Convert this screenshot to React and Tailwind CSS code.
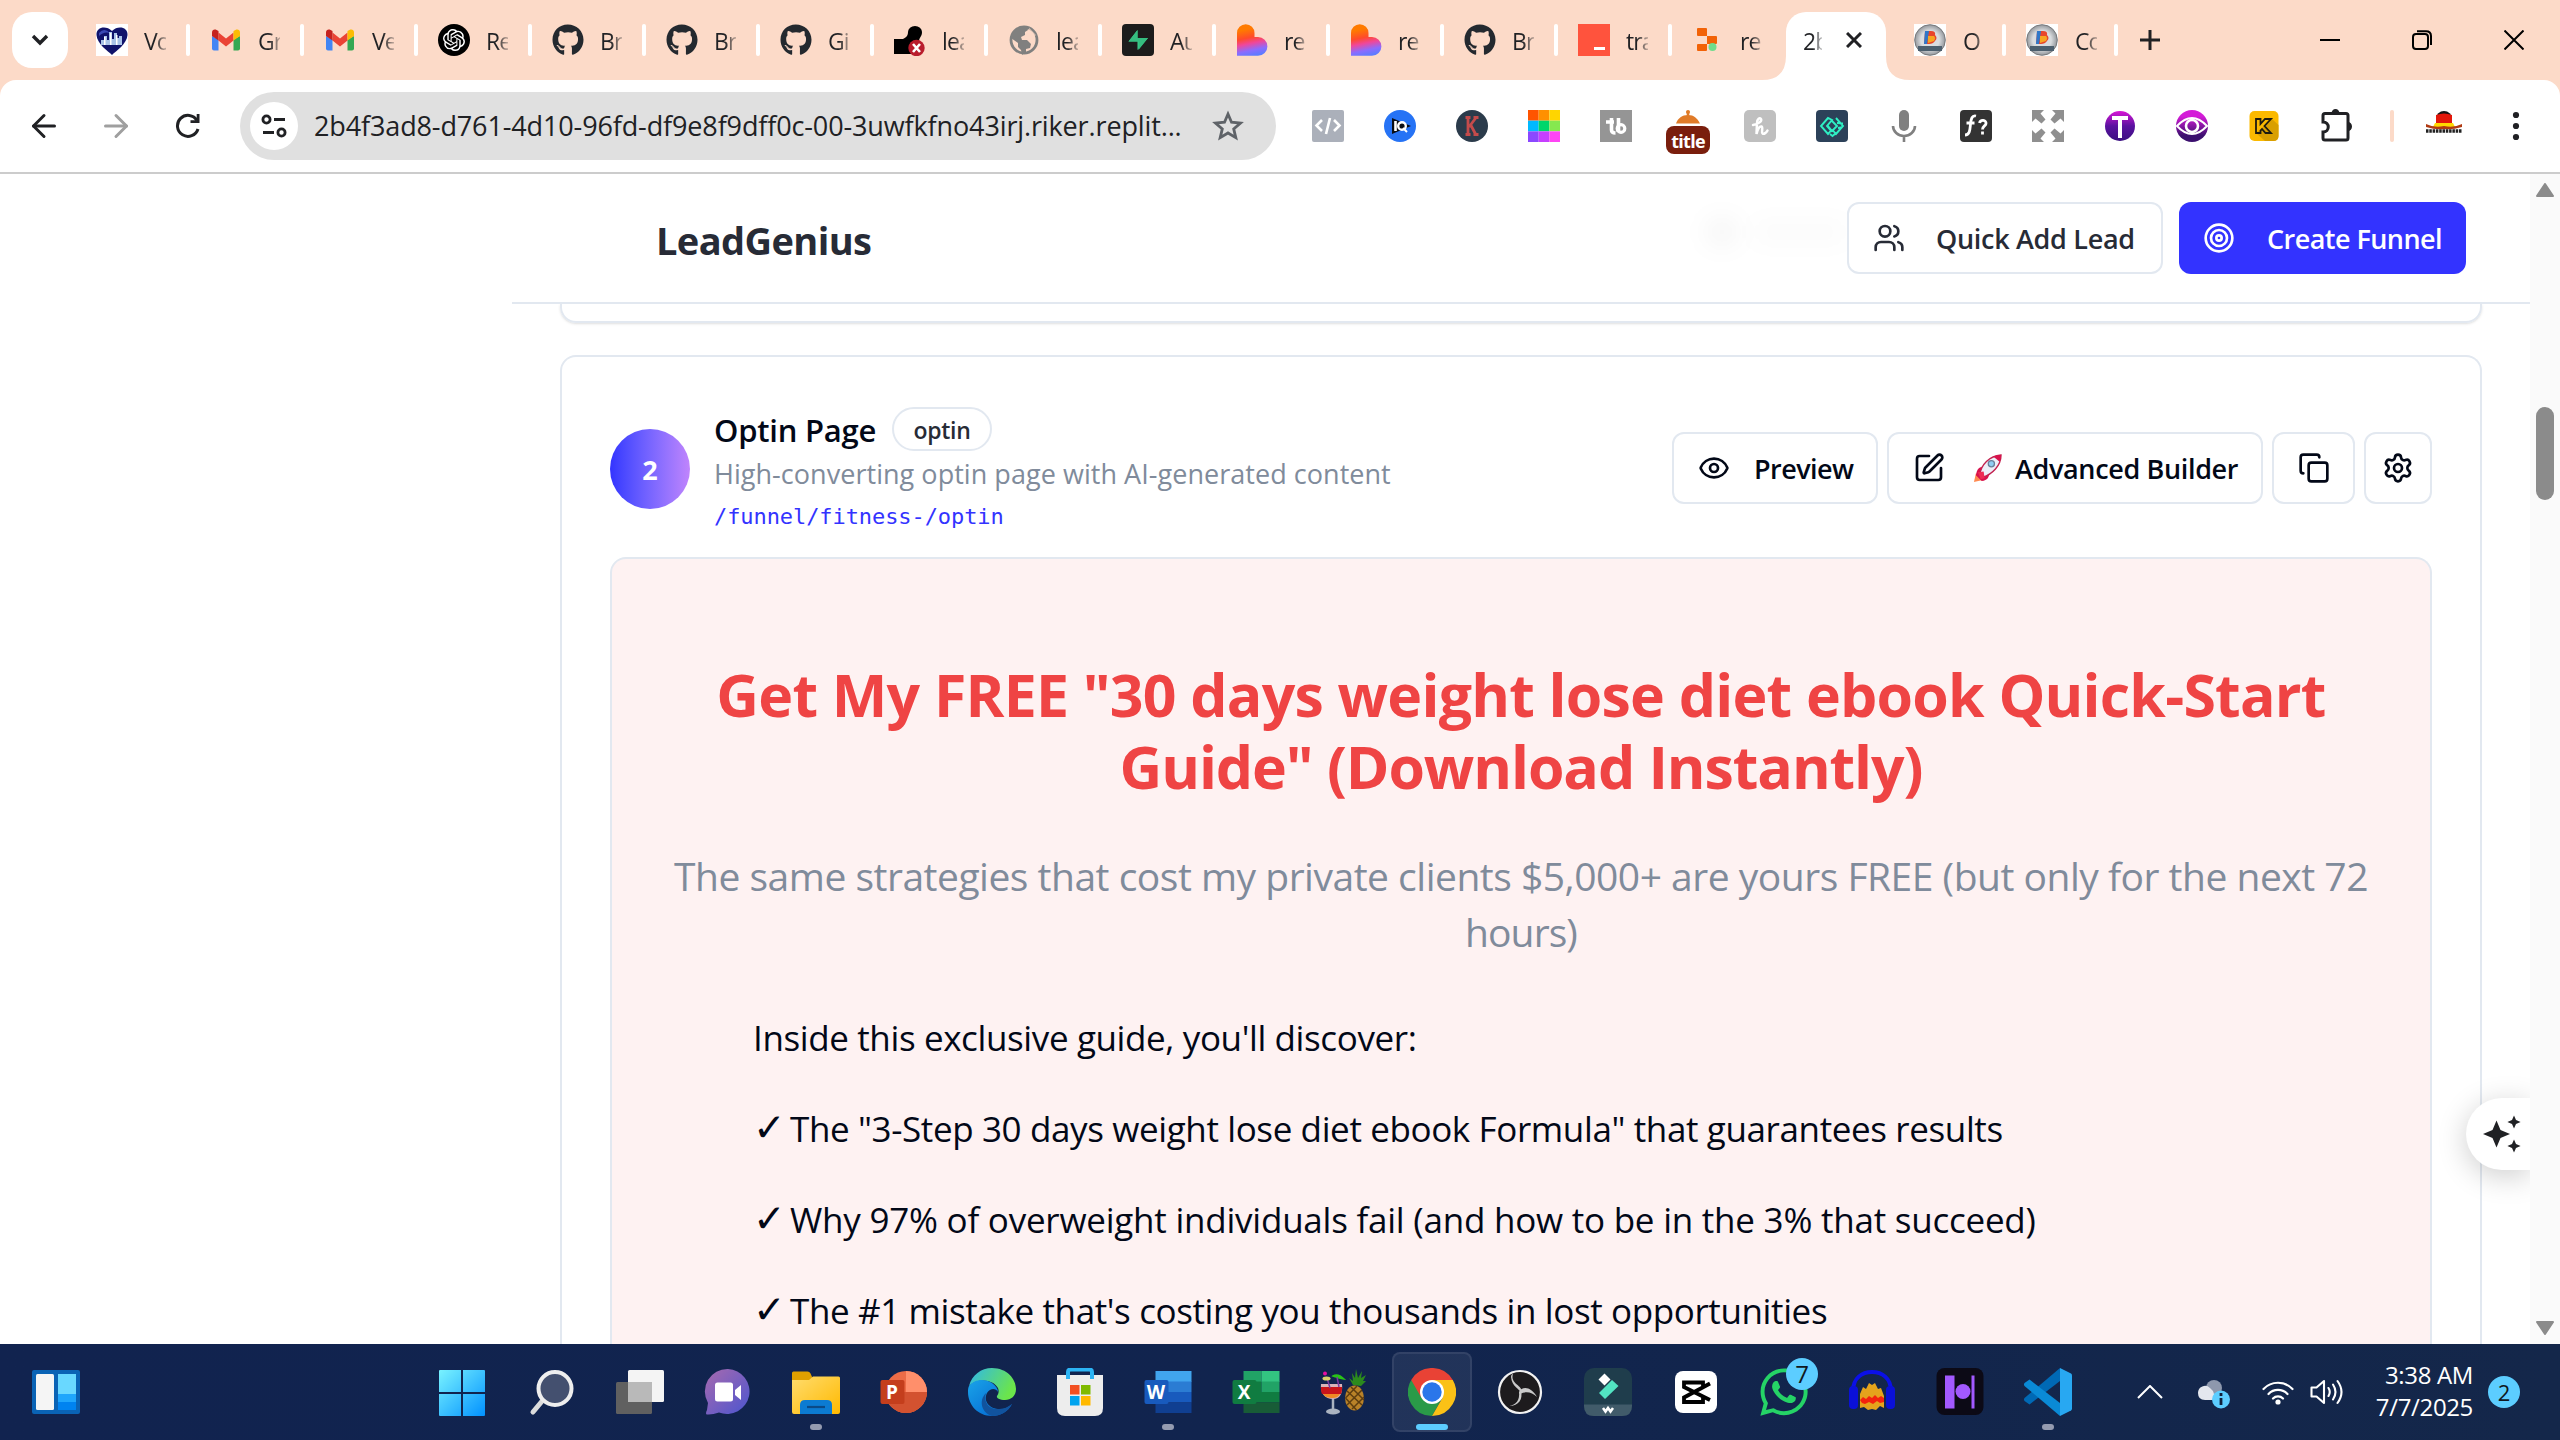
import { Users, Target, Eye, SquarePen, Copy, Settings, ArrowLeft, ArrowRight } from "lucide-react";
import { FaGithub, FaWhatsapp } from "react-icons/fa";
import { SiOpenai } from "react-icons/si";

/* ---------- tab favicons ---------- */

const Heart = () => (
  <svg viewBox="0 0 32 32" className="size-8 bg-white">
    <path d="M16 31C12 27 1 20 0.500 11 0 3 10 1 16 7 22 1 32 3 31.500 11 31 20 20 27 16 31Z" fill="#10136b" />
    <path d="M3 9q5-6 11 0-6-2-11 3z" fill="#3a49b4" />
    <path d="M5 21v-5h3v-4h3v4h2V8h3v7h2V9h3v5h2v-2h3v9Z" fill="#a9c3e8" />
    <path d="M8 21v-8h1.500v8zM14 21V9h1.500v12zM20 21V11h1.500v10z" fill="#fff" />
  </svg>
);

const Gmail = () => (
  <svg viewBox="0 0 32 32" className="size-8">
    <path d="M2 12v12.500q0 2 2 2h4.500V15.500z" fill="#4285f4" />
    <path d="M30 12v12.500q0 2-2 2h-4.500V15.500z" fill="#34a853" />
    <path d="M8.500 8.500 16 14.500l7.500-6v8L16 22.500l-7.500-6z" fill="#ea4335" />
    <path d="M2 8.500C2 5 5.500 4.500 8.500 7v9.500L2 12z" fill="#c5221f" />
    <path d="M30 8.500C30 5 26.500 4.500 23.500 7v9.500L30 12z" fill="#fbbc04" />
  </svg>
);

const OpenAI = () => (
  <span className="flex size-8 items-center justify-center rounded-full bg-black">
    <SiOpenai className="size-[22px] text-white" />
  </span>
);

const GitHub = () => <FaGithub className="size-8 text-[#24292f]" />;

const BrokenSite = () => (
  <svg viewBox="0 0 32 32" className="size-8">
    <path d="M0 15h9c4-2 5-4 5-7a7 6 0 0 1 14 0c0 5-3 5-3 10v12H0z" fill="#000" />
    <path d="M0 29q7-7 0-12z" fill="#000" />
    <circle cx="22.500" cy="24" r="8.200" fill="#b91c2c" />
    <path d="m19 20 7 8m0-8-7 8" stroke="#fff" strokeWidth="2.600" />
  </svg>
);

const Globe = () => (
  <svg viewBox="0 0 32 32" className="size-8">
    <circle cx="16" cy="16" r="13" fill="none" stroke="#80807f" strokeWidth="2.800" />
    <path d="M3 14C5 6 12 2 19 3l1 3-3 2v3l-4 2 1 3h5l4 4-1 4-4 1v3l-4 3-1-5-3-3v-4z" fill="#80807f" />
    <path d="M21 3.500 28 11l-4 4-4-2-2-3 3-2z" fill="#fcdac8" opacity="0.600" />
  </svg>
);

const Supabase = () => (
  <svg viewBox="0 0 32 32" className="size-8">
    <rect width="32" height="32" rx="4" fill="#1c1c1c" />
    <path d="M15.500 6v11.500H6.500zM26 14H15.500v12z" fill="#3ecf8e" />
    <path d="M15.500 6v8H26L16.500 26v-8.500h-10z" fill="#35bd80" />
  </svg>
);

const Lovable = ({ id }) => (
  <svg viewBox="0 0 32 32" className="size-8">
    <defs>
      <linearGradient id={id} x1="0.350" y1="0" x2="0.550" y2="1">
        <stop offset="0.150" stopColor="#ff7a00" />
        <stop offset="0.420" stopColor="#ff4a2b" />
        <stop offset="0.600" stopColor="#f0479a" />
        <stop offset="0.820" stopColor="#8a6cff" />
        <stop offset="1" stopColor="#5b7cff" />
      </linearGradient>
    </defs>
    <path d="M1 9a8.700 8.700 0 0 1 17.500 0v4h3.500a9.300 9.300 0 0 1 0 18.800H1z" fill={`url(#${id})`} />
  </svg>
);

const RedSquare = () => (
  <svg viewBox="0 0 32 32" className="size-8">
    <rect width="32" height="32" fill="#ff533d" />
    <rect x="16" y="23" width="11" height="3" fill="#fff" />
  </svg>
);

const Replit = () => (
  <svg viewBox="0 0 32 32" className="size-8">
    <path d="M6 4h8q1 0 1 1v7H6q-1 0-1-1V5q0-1 1-1zM15 12h9q1 0 1 1v6q0 1-1 1h-9zM6 20h9v6q0 1-1 1H6q-1 0-1-1v-5q0-1 1-1z" fill="#f26207" />
    <circle cx="20.500" cy="23" r="4" fill="#6fdc8c" />
  </svg>
);

const Blogger = ({ id }) => (
  <svg viewBox="0 0 32 32" className="size-8 bg-white">
    <defs>
      <radialGradient id={id}>
        <stop offset="0.600" stopColor="#d9dcdf" />
        <stop offset="1" stopColor="#93979c" />
      </radialGradient>
    </defs>
    <circle cx="16" cy="16" r="15.300" fill={`url(#${id})`} stroke="#77797c" />
    <path d="M11 7h6q5 0 4 4 3 3 0 6-2 3-6 3h-5z" fill="#e8452c" />
    <path d="M11 7h4l-2 13h-3z" fill="#2f77c9" />
    <path d="M14 12h6q2 2 0 5l-6 2z" fill="#f7a521" />
    <path d="M4 22h24v5H4z" fill="#4c5f6e" />
  </svg>
);

const tabs = [
  ["Vo", <Heart />],
  ["Gr", <Gmail />],
  ["Ve", <Gmail />],
  ["Re", <OpenAI />],
  ["Br", <GitHub />],
  ["Br", <GitHub />],
  ["Gi", <GitHub />],
  ["lea", <BrokenSite />],
  ["lea", <Globe />],
  ["Au", <Supabase />],
  ["re", <Lovable id="lv1" />],
  ["re", <Lovable id="lv2" />],
  ["Br", <GitHub />],
  ["tra", <RedSquare />],
  ["re", <Replit />],
];

function TabTitle({ children }) {
  return (
    <span className="mt-0.5 w-[22px] overflow-hidden bg-linear-to-r from-[#202124] from-50% to-[#20212440] bg-clip-text text-[23px] leading-8 tracking-[-0.9px] whitespace-nowrap text-transparent">
      {children}
    </span>
  );
}

function TabStrip() {
  return (
    <div className="flex h-20 shrink-0 items-center bg-[#fcdac8]">
      <button className="ml-3 flex size-14 items-center justify-center rounded-[20px] bg-white">
        <svg viewBox="0 0 20 20" className="size-5">
          <path d="m3 6 7 7 7-7" fill="none" stroke="#202124" strokeWidth="3.400" />
        </svg>
      </button>
      <div className="ml-2 flex">
        {tabs.map(([title, icon], i) => (
          <div key={i} className="flex h-8 w-[114px] items-center pl-5">
            {icon}
            <div className="ml-4 flex">
              <TabTitle>{title}</TabTitle>
            </div>
            {i < tabs.length - 1 && <span className="ml-auto h-8 w-1 rounded-full bg-white" />}
          </div>
        ))}
      </div>
      <div className="relative flex h-[68px] w-[100px] items-center self-end rounded-t-[20px] bg-white pb-3 pl-[17px]">
        <svg viewBox="0 0 24 24" className="absolute bottom-0 -left-6 size-6">
          <path d="M24 0v24H0Q24 24 24 0" fill="#fff" />
        </svg>
        <svg viewBox="0 0 24 24" className="absolute -right-6 bottom-0 size-6">
          <path d="M0 0v24h24Q0 24 0 0" fill="#fff" />
        </svg>
        <span className="mt-0.5 w-[19px] overflow-hidden bg-linear-to-r from-[#202124] from-50% to-[#20212440] bg-clip-text text-[23px] leading-8 tracking-[-0.9px] whitespace-nowrap text-transparent">
          2b
        </span>
        <svg viewBox="0 0 16 16" className="ml-6 size-4">
          <path d="m1 1 14 14M15 1 1 15" stroke="#202124" strokeWidth="3" />
        </svg>
      </div>
      <div className="ml-2 flex">
        {["O", "Co"].map((t, i) => (
          <div key={t} className="flex h-8 w-28 items-center pl-5">
            <Blogger id={t + "g"} />
            <div className="ml-[17px] flex">
              <TabTitle>{t}</TabTitle>
            </div>
            <span className="ml-auto h-8 w-1 rounded-full bg-white" />
          </div>
        ))}
      </div>
      <svg viewBox="0 0 20 20" className="ml-[22px] size-5">
        <path d="M10 0v20M0 10h20" stroke="#202124" strokeWidth="3" />
      </svg>
      <div className="mr-9 ml-auto flex items-center gap-[72px]">
        <svg viewBox="0 0 20 20" className="size-5">
          <path d="M0 10h20" stroke="#000" strokeWidth="2" />
        </svg>
        <svg viewBox="0 0 20 20" className="size-5">
          <rect x="1" y="4" width="15" height="15" rx="3" fill="none" stroke="#000" strokeWidth="2" />
          <path d="M5 1.200h9Q19 1.200 19 6v9" fill="none" stroke="#000" strokeWidth="2" />
        </svg>
        <svg viewBox="0 0 20 20" className="size-5">
          <path d="m.5.5 19 19M19.500.5l-19 19" stroke="#000" strokeWidth="2" />
        </svg>
      </div>
    </div>
  );
}

/* ---------- extension icons ---------- */

const extensions = [
  <svg viewBox="0 0 32 32" className="size-8">
    <rect width="32" height="32" rx="2" fill="#abb0ba" />
    <path d="m10 10-5.500 5.500L10 21M22 10l5.500 5.500L22 21M18 8l-4 16" fill="none" stroke="#fff" strokeWidth="2.600" />
  </svg>,
  <svg viewBox="0 0 32 32" className="size-8">
    <circle cx="16" cy="16" r="16" fill="#2673f5" />
    <path d="m8 8 19 8-19 8z" fill="#0b0e14" />
    <path d="M11.500 11v10" stroke="#fff" strokeWidth="2.600" />
    <circle cx="18" cy="16" r="3.800" fill="#0b0e14" stroke="#fff" strokeWidth="2.400" />
    <path d="m19 18 4 4" stroke="#fff" strokeWidth="2" />
  </svg>,
  <svg viewBox="0 0 32 32" className="size-8">
    <circle cx="16" cy="16" r="16" fill="#2b3b4b" />
    <path d="M12 7v18M20.500 7 13 17M14.500 14.500 20 25M9.500 7.500h5M9.500 24.500h5M17.500 7.500h5M17.500 24.500h5" fill="none" stroke="#c44b4b" strokeWidth="2.800" />
  </svg>,
  <svg viewBox="0 0 33 33" className="size-8">
    <path d="M0 0h11v11H0z" fill="#ff5400" />
    <path d="M11 0h11v11H11z" fill="#ff9000" />
    <path d="M22 0h11v11H22z" fill="#ffd500" />
    <path d="M0 11h11v11H0z" fill="#00b9ff" />
    <path d="M11 11h11v11H11z" fill="#00d66b" />
    <path d="M22 11h11v11H22z" fill="#86e84f" />
    <path d="M0 22h11v11H0z" fill="#8b48ff" />
    <path d="M11 22h11v11H11z" fill="#c63fff" />
    <path d="M22 22h11v11H22z" fill="#ff45f5" />
  </svg>,
  <svg viewBox="0 0 32 32" className="size-8">
    <rect width="32" height="32" fill="#959595" />
    <path d="M6 12h8M11.500 8v12q0 3 4 3M18.500 8v14" fill="none" stroke="#fff" strokeWidth="3.600" />
    <circle cx="21" cy="18.500" r="3.800" fill="none" stroke="#fff" strokeWidth="3.200" />
  </svg>,
  <span className="flex w-11 flex-col items-center gap-0.5 pt-3">
    <svg viewBox="0 0 28 14" className="h-3.5 w-7">
      <path d="M2 13.500C4 8 8 5 14 5s9 3 12 8.500z" fill="#e07b28" />
      <path d="M14 1v6" stroke="#e07b28" strokeWidth="2.500" />
      <circle cx="14" cy="2" r="2" fill="#e07b28" />
    </svg>
    <span className="flex h-7 w-11 items-center justify-center rounded-lg bg-[#7a1e0d] pt-0.5 text-[18px] leading-6 font-bold tracking-[-0.7px] text-white">
      title
    </span>
  </span>,
  <svg viewBox="0 0 32 32" className="size-8">
    <rect width="32" height="32" rx="5" fill="#bfbfbf" />
    <path d="M9 15c6-1 9-4 8-6s-4 0-4 4l-.5 11c1-5 3-8 5-7.500s-.5 6 1 7 4-1 5-3" fill="none" stroke="#fff" strokeWidth="2.500" strokeLinecap="round" />
  </svg>,
  <svg viewBox="0 0 32 32" className="size-8">
    <rect width="32" height="32" rx="4" fill="#2c4159" />
    <path d="m12 8-7 8 7 8 3-3.500L11 16l5-6zM20 8l7 8-7 8-3-3.500M16 11l5 5-5 5-4-5M14 24l2.500 2L20 23M21 13l6 .5M22 18l5-1" fill="none" stroke="#2ff0c4" strokeWidth="1.900" />
  </svg>,
  <svg viewBox="0 0 32 32" className="size-8">
    <rect x="11" y="0" width="10" height="21" rx="5" fill="#808080" />
    <path d="M5 16a11 10 0 0 0 22 0M16 26v6" fill="none" stroke="#808080" strokeWidth="2.600" />
  </svg>,
  <svg viewBox="0 0 32 32" className="size-8">
    <rect width="32" height="32" rx="4" fill="#333" />
    <path d="M16 6c-4-1-5 3-5.500 8S10 25 5 25M6.500 13h8" fill="none" stroke="#fff" strokeWidth="2.800" />
    <path d="M19.500 13c1-4 7-3 6.500.5-.3 2.500-3.500 2.500-3.500 6M22.500 21.500v3" fill="none" stroke="#fff" strokeWidth="2.800" />
  </svg>,
  <svg viewBox="0 0 32 32" className="size-8">
    <path d="M0 0h12L8.500 3.500l5 6-4 4-6-5L0 12zM32 0H20l3.500 3.500-5 6 4 4 6-5L32 12zM0 32h12l-3.500-3.500 5-6-4-4-6 5L0 20zM32 32H20l3.500-3.500-5-6 4-4 6 5L32 20z" fill="#8f8f8f" />
  </svg>,
  <svg viewBox="0 0 32 32" className="size-8">
    <defs>
      <linearGradient id="pt" x1="0" y1="0" x2="0" y2="1">
        <stop offset="0" stopColor="#d915d6" />
        <stop offset="0.500" stopColor="#5a12a0" />
        <stop offset="1" stopColor="#3a0f80" />
      </linearGradient>
    </defs>
    <circle cx="16" cy="16" r="15" fill="url(#pt)" />
    <path d="M8 8h16M16 8v20" stroke="#fff" strokeWidth="4" />
  </svg>,
  <svg viewBox="0 0 32 32" className="size-8">
    <defs>
      <linearGradient id="pe" x1="0" y1="0" x2="0" y2="1">
        <stop offset="0.200" stopColor="#d41bd8" />
        <stop offset="0.800" stopColor="#3b0f6e" />
      </linearGradient>
    </defs>
    <circle cx="16" cy="16" r="16" fill="url(#pe)" />
    <path d="M1 16Q16 0 31 16 16 32 1 16Z" fill="none" stroke="#fff" strokeWidth="2" />
    <circle cx="16" cy="16" r="6" fill="none" stroke="#fff" strokeWidth="2.600" />
  </svg>,
  <svg viewBox="0 0 32 32" className="size-8">
    <rect x="1.500" y="1" width="29" height="30" rx="5" fill="#fbb900" />
    <path d="m24 9 6.500 6v11q0 5-5 5H17l-9-8z" fill="#d99f00" />
    <path d="M8 9h4.500v5l4.500-5h6l-6.500 7 6.500 7h-5.500l-3.500-4-1.500 1.500V23H8z" fill="none" stroke="#1c1a10" strokeWidth="1.800" />
  </svg>,
  <svg viewBox="0 0 32 32" className="size-8 overflow-visible">
    <path d="M5 3.500h21q2 0 2 2V28q0 2-2 2H5q-2 0-2-2v-6c7 0 7-10 0-10V5.500q0-2 2-2z" fill="none" stroke="#202124" strokeWidth="3" />
    <path d="M11.500 3.500a4 4.500 0 0 1 8 0zM28 12a4 4.500 0 0 1 0 9z" fill="#202124" />
  </svg>,
];

function Toolbar() {
  return (
    <div className="shrink-0 bg-[#fcdac8]">
      <div className="flex h-[94px] items-center rounded-t-[16px] border-b-2 border-[#cccccc] bg-white pl-2">
        <div className="flex w-[72px] justify-center">
          <ArrowLeft className="size-9 text-[#202124]" strokeWidth={2} />
        </div>
        <div className="flex w-[72px] justify-center">
          <ArrowRight className="size-9 text-[#9f9f9f]" strokeWidth={2} />
        </div>
        <div className="flex w-[72px] justify-center">
          <svg viewBox="0 0 26 26" className="size-[26px]">
            <path d="M23 16a10.500 10.500 0 1 1-1-8.500" fill="none" stroke="#202124" strokeWidth="3" />
            <path d="M24.500 1v9h-9v-2.800h6.200V1z" fill="#202124" />
          </svg>
        </div>
        <div className="ml-4 flex h-[68px] w-[1036px] items-center rounded-full bg-[#e0e0e0] pl-2.5">
          <span className="flex size-12 items-center justify-center rounded-full bg-white">
            <svg viewBox="0 0 26 24" className="h-6 w-[26px]">
              <g fill="none" stroke="#202124" strokeWidth="2.800">
                <circle cx="5.500" cy="5.500" r="3.600" />
                <path d="M13 5.500h11M2 18.500h11" />
                <circle cx="20.500" cy="18.500" r="3.600" />
              </g>
            </svg>
          </span>
          <span className="ml-4 text-[27px] leading-9 tracking-[-0.13px] whitespace-nowrap text-[#202124]">
            2b4f3ad8-d761-4d10-96fd-df9e8f9dff0c-00-3uwfkfno43irj.riker.replit...
          </span>
          <svg viewBox="0 0 32 32" className="mr-8 ml-auto size-8">
            <path d="m16 4 3.500 8.200 9 .8-6.800 5.900 2.100 8.700L16 23l-7.800 4.600 2.100-8.700L3.500 13l9-.8z" fill="none" stroke="#5f6368" strokeWidth="2.800" />
          </svg>
        </div>
        <div className="ml-4 flex">
          {extensions.map((icon, i) => (
            <div key={i} className="flex h-8 w-[72px] items-center justify-center">
              {icon}
            </div>
          ))}
        </div>
        <span className="ml-[18px] h-8 w-1 rounded-full bg-[#fcdac8]" />
        <svg viewBox="0 0 40 24" className="mb-2 ml-[30px] h-6 w-10">
          <path d="M12 9a8 8 0 0 1 16 0z" fill="#151515" />
          <path d="M12 5q8-3 16 0v8H12z" fill="#e3170a" />
          <path d="M11 13h18l2 4H9z" fill="#ffd800" />
          <path d="M2 14q8 4 18 2 10 2 18-2v3q-10 3-18 2-8 1-18-2z" fill="#b03a12" />
          <path d="M2 21h36" stroke="#222" strokeWidth="3.500" strokeDasharray="2.500 0.800" />
        </svg>
        <svg viewBox="0 0 8 30" className="ml-[48px] h-[30px] w-2">
          <circle cx="4" cy="4" r="3.100" fill="#202124" />
          <circle cx="4" cy="15" r="3.100" fill="#202124" />
          <circle cx="4" cy="26" r="3.100" fill="#202124" />
        </svg>
      </div>
    </div>
  );
}

/* ---------- page ---------- */

function PageHeader() {
  return (
    <header className="relative flex h-[130px] shrink-0 items-center border-b-2 border-[#e2e8f0] pr-16 pl-36">
      <span className="absolute top-[44px] left-[1194px] h-7 w-8 rounded-full bg-black/4 blur-md" />
      <span className="absolute top-[48px] left-[1240px] h-5 w-24 rounded-full bg-black/2 blur-md" />
      <h1 className="relative mt-[3px] text-[38px] leading-[48px] font-bold tracking-[-0.6px] text-[#272b36]">LeadGenius</h1>
      <div className="relative ml-auto flex gap-4">
        <button className="flex h-[72px] w-[316px] items-center gap-8 rounded-[12px] border-2 border-[#e2e8f0] bg-white pl-6 text-[27px] font-semibold tracking-[-0.3px] whitespace-nowrap text-[#272b36]">
          <Users className="size-8 shrink-0" />
          <span className="mt-0.5 -ml-px">Quick Add Lead</span>
        </button>
        <button className="flex h-[72px] w-[287px] items-center gap-8 rounded-[12px] bg-[#3333ff] pl-6 text-[27px] font-semibold tracking-[-0.55px] whitespace-nowrap text-white">
          <Target className="size-8 shrink-0" />
          <span className="mt-0.5">Create Funnel</span>
        </button>
      </div>
    </header>
  );
}

function CheckLine({ children }) {
  return (
    <p className="flex items-center">
      <span className="-mt-0.5 w-[37px] font-['DejaVu_Sans'] text-[39px]">✓</span>
      {children}
    </p>
  );
}

const Rocket = () => (
  <svg viewBox="0 0 30 30" className="ml-7 size-[29px]">
    <path d="m1 29 2-9 7 7z" fill="#ff8a50" />
    <path d="M3 22c1-7 4-9 9-9l5 5c0 6-2 9-8 10z" fill="#d8124c" />
    <path d="M7 22C8 11 17 2 29 1c0 11-9 20-19 23z" fill="#eceff8" stroke="#c2224f" strokeWidth="1.400" />
    <path d="M29 1c0 3-.5 5-1.500 7L21 2.500C24 1.300 26 1 29 1z" fill="#d8124c" />
    <path d="m5 19 6-1 1 7-4 1z" fill="#ee2b54" />
    <circle cx="19" cy="10" r="3.200" fill="#8fcdf2" stroke="#6b7f9a" strokeWidth="1.300" />
  </svg>
);

function StepCard() {
  return (
    <section className="mt-8 flex grow flex-col rounded-t-[16px] border-2 border-b-0 border-[#e2e8f0] px-12 pt-[50px]">
      <div className="flex h-[130px] items-start">
        <span className="mt-[22px] flex size-20 items-center justify-center rounded-full bg-linear-to-r from-[#3333ff] to-[#c084fc] pt-0.5 text-[27px] font-bold text-white">
          2
        </span>
        <div className="ml-6">
          <div className="flex h-11 items-center">
            <h3 className="mt-0.5 text-[31px] leading-[44px] font-semibold tracking-[-0.24px] text-[#020817]">Optin Page</h3>
            <span className="ml-[16px] flex h-11 w-[100px] items-center justify-center rounded-full border-2 border-[#e2e8f0] pt-0.5 text-[23px] font-semibold tracking-[-0.3px] text-[#272b36]">
              optin
            </span>
          </div>
          <p className="text-[27px] leading-[46px] tracking-[0.04px] text-[#808b9b]">High-converting optin page with AI-generated content</p>
          <p className="font-['DejaVu_Sans_Mono',monospace] text-[22px] leading-10 tracking-[-0.08px] text-[#3333ff]">/funnel/fitness-/optin</p>
        </div>
        <div className="mt-[25px] ml-auto flex gap-[9px] text-[27px] font-semibold whitespace-nowrap text-[#020817]">
          <button className="flex h-[72px] w-[206px] items-center gap-6 rounded-[12px] border-2 border-[#e2e8f0] pl-6 tracking-[-0.55px]">
            <Eye className="size-8 shrink-0" />
            <span className="mt-0.5">Preview</span>
          </button>
          <button className="flex h-[72px] w-[376px] items-center rounded-[12px] border-2 border-[#e2e8f0] pl-6 tracking-[-0.35px]">
            <SquarePen className="size-8 shrink-0" />
            <Rocket />
            <span className="mt-0.5 ml-[13px]">Advanced Builder</span>
          </button>
          <button className="flex h-[72px] w-[83px] items-center justify-center rounded-[12px] border-2 border-[#e2e8f0]">
            <Copy className="size-8" />
          </button>
          <button className="flex h-[72px] w-[68px] items-center justify-center rounded-[12px] border-2 border-[#e2e8f0]">
            <Settings className="size-8" />
          </button>
        </div>
      </div>
      <div className="mt-5 grow rounded-t-[16px] border-2 border-b-0 border-[#e2e8f0] bg-[#fef2f2] pt-[99px]">
        <h2 className="text-center text-[59px] leading-[72px] font-bold tracking-[-0.78px] whitespace-nowrap text-[#ef4444]">
          Get My FREE "30 days weight lose diet ebook Quick-Start
          <br />
          <span className="tracking-[-1.08px]">Guide" (Download Instantly)</span>
        </h2>
        <p className="mt-[46px] text-center text-[39px] leading-[56px] tracking-[-0.49px] whitespace-nowrap text-[#808b9b]">
          The same strategies that cost my private clients $5,000+ are yours FREE (but only for the next 72
          <br />
          <span className="tracking-[-0.9px]">hours)</span>
        </p>
        <div className="mt-8 pl-[141px] text-[35px] leading-[91px] tracking-[-0.38px] whitespace-nowrap text-[#020817]">
          <p>Inside this exclusive guide, you'll discover:</p>
          <CheckLine>The "3-Step 30 days weight lose diet ebook Formula" that guarantees results</CheckLine>
          <CheckLine>
            <span className="tracking-[-0.23px]">Why 97% of overweight individuals fail (and how to be in the 3% that succeed)</span>
          </CheckLine>
          <CheckLine>The #1 mistake that's costing you thousands in lost opportunities</CheckLine>
        </div>
      </div>
    </section>
  );
}

function Page() {
  return (
    <div className="relative flex h-[1170px] shrink-0 overflow-hidden bg-white">
      <aside className="w-[512px] shrink-0" />
      <main className="flex w-[2018px] shrink-0 flex-col">
        <PageHeader />
        <div className="flex grow flex-col px-12">
          <div className="h-[19px] rounded-b-[16px] border-2 border-t-0 border-[#e2e8f0] shadow-sm" />
          <StepCard />
        </div>
      </main>
      <div className="absolute top-[924px] right-[30px] h-[72px] w-[64px] overflow-visible [clip-path:inset(-60px_0_-60px_-60px)]">
        <div className="flex h-full items-center rounded-l-full bg-white pl-[17px] shadow-[0_6px_30px_rgba(0,0,0,0.2)]">
          <svg viewBox="0 0 38 38" className="size-[38px]">
            <path d="m13.500 5.500 4 9.500 9.500 4-9.500 4-4 9.500-4-9.500-9.500-4 9.500-4zM31 .5l2 4.600 4.600 2-4.600 2-2 4.500-2-4.500-4.600-2 4.600-2zM31 24.500l2 4.600 4.600 2-4.600 2-2 4.500-2-4.500-4.600-2 4.600-2z" fill="#202124" />
          </svg>
        </div>
      </div>
      <div className="flex w-[30px] flex-col items-center bg-[#fafafa]">
        <svg viewBox="0 0 18 14" className="mt-[9px] h-3.5 w-[18px] shrink-0">
          <path d="M9 1 17 13H1z" fill="#8b8b8b" stroke="#8b8b8b" strokeWidth="2" strokeLinejoin="round" />
        </svg>
        <span className="mt-[210px] h-[93px] w-[18px] rounded-full bg-[#8b8b8b]" />
        <svg viewBox="0 0 18 14" className="mt-auto mb-[9px] h-3.5 w-[18px] shrink-0">
          <path d="M9 13 17 1H1z" fill="#8b8b8b" stroke="#8b8b8b" strokeWidth="2" strokeLinejoin="round" />
        </svg>
      </div>
    </div>
  );
}

/* ---------- taskbar ---------- */

const G = ({ id, a, b, x2 = "1", y2 = "1" }) => (
  <linearGradient id={id} x1="0" y1="0" x2={x2} y2={y2}>
    <stop offset="0" stopColor={a} />
    <stop offset="1" stopColor={b} />
  </linearGradient>
);

const Office = ({ letter, box, children }) => (
  <span className="relative flex size-12">
    <svg viewBox="0 0 48 48" className="size-12">
      {children}
      <rect x="0.500" y="12" width="24" height="24" rx="2" fill={box} />
    </svg>
    <span className="absolute top-3 left-0 w-6 text-center text-[19px] leading-6 font-bold text-white">{letter}</span>
  </span>
);

const apps = [
  {
    icon: (
      <svg viewBox="0 0 48 48" className="size-12">
        <defs>
          <linearGradient id="win" gradientUnits="userSpaceOnUse" x1="0" y1="0" x2="48" y2="48">
            <stop offset="0" stopColor="#7df6ff" />
            <stop offset="1" stopColor="#0090ff" />
          </linearGradient>
        </defs>
        <path d="M1 3q0-1 1-1h21v22H1zM25 2h21q1 0 1 1v21H25zM1 26h22v22H2q-1 0-1-1zM25 26h22v21q0 1-1 1H25z" fill="url(#win)" />
      </svg>
    ),
  },
  {
    icon: (
      <svg viewBox="0 0 48 48" className="size-12">
        <path d="M15 32 5 44" stroke="#dcdcdc" strokeWidth="5" strokeLinecap="round" />
        <circle cx="27" cy="20.500" r="16.500" fill="#44506f" stroke="#eee" strokeWidth="4" />
      </svg>
    ),
  },
  {
    icon: (
      <svg viewBox="0 0 48 48" className="size-12">
        <rect x="0" y="14" width="36" height="32" rx="1.500" fill="#606060" />
        <rect x="12" y="2" width="36" height="32" rx="1.500" fill="#f4f4f4" />
        <path d="M12 14h24v20H12z" fill="#b9b9b9" />
      </svg>
    ),
  },
  {
    icon: (
      <svg viewBox="0 0 48 48" className="size-12">
        <defs><G id="chat" a="#a86aae" b="#4b55d0" /></defs>
        <path d="M24 1a22.500 22.500 0 1 1-9 43.500Q8 47 3 46.500 1 46 3 42L4 35A22.500 22.500 0 0 1 24 1z" fill="url(#chat)" />
        <rect x="11" y="14.500" width="18" height="19" rx="2.500" fill="#fff" />
        <path d="m31 22 6-5v15l-6-5z" fill="#fff" />
      </svg>
    ),
  },
  {
    dot: true,
    icon: (
      <svg viewBox="0 0 48 48" className="size-12">
        <defs><G id="fold" a="#ffdc6e" b="#ffb900" /></defs>
        <path d="M0 5q0-1.500 1.500-1.500h14q2 0 3 2l3 6.500H0z" fill="#e0a000" />
        <path d="M0 12h17l4-3.500h25.500Q48 8.500 48 10v34q0 2-2 2H2q-2 0-2-2z" fill="url(#fold)" />
        <path d="M8 46V37q0-5 5-5h22q5 0 5 5v9z" fill="#0c7bd2" />
        <path d="M15 39h18" stroke="#0b4a87" strokeWidth="2.200" />
      </svg>
    ),
  },
  {
    icon: (
      <Office letter="P" box="#c43e1c">
        <circle cx="26" cy="24" r="21" fill="#ed6c47" />
        <path d="M26 3a21 21 0 0 1 21 21H26z" fill="#ff8f6b" />
        <path d="M5 24h42a21 21 0 0 1-42 0z" fill="#d35230" />
      </Office>
    ),
  },
  {
    icon: (
      <svg viewBox="0 0 48 48" className="size-12">
        <defs>
          <G id="e1" a="#2fb7ec" b="#6be54b" y2="0.400" />
          <G id="e2" a="#1aa3e8" b="#0060cf" />
        </defs>
        <path d="M1 18C4 7 13 0 24 0c15 0 24 11 24 21 0 7-5 11-11 11-5 0-9-2-8-4 2-3 2-5 1-8C26 12 10 9 1 18z" fill="url(#e1)" />
        <path d="M44 36C40 44 32 48 24 48 10 48 0 37 0 24c0-2 0-4 1-6 5-7 16-8 23-3 4 3 6 6 6 9-2-4-8-4-11 1-4 8 2 16 13 16 5 0 9-2 12-5z" fill="url(#e2)" />
        <path d="M18 25c-3 9 3 17 13 16 5 0 9-2 13-5-4 8-12 12-20 12-10-3-14-15-6-23z" fill="#11539e" />
      </svg>
    ),
  },
  {
    icon: (
      <svg viewBox="0 0 48 48" className="size-12">
        <path d="M1 7h46v33q0 8-8 8H9q-8 0-8-8z" fill="#ededed" />
        <path d="M12 11V4q0-2.500 2.500-2.500h19Q36 1.500 36 4v7" fill="none" stroke="#2cb4f4" strokeWidth="4" />
        <path d="M14 17h9.500v9.500H14z" fill="#f25022" />
        <path d="M25 17h9.500v9.500H25z" fill="#7fba00" />
        <path d="M14 28h9.500v9.500H14z" fill="#00a4ef" />
        <path d="M25 28h9.500v9.500H25z" fill="#ffb900" />
      </svg>
    ),
  },
  {
    dot: true,
    icon: (
      <Office letter="W" box="#185abd">
        <path d="M11.500 3h36v11h-36z" fill="#41a5ee" />
        <path d="M11.500 13.500h36V24h-36z" fill="#2b7cd3" />
        <path d="M11.500 24h36v10.500h-36z" fill="#185abd" />
        <path d="M11.500 34.500h36V45h-36z" fill="#103f91" />
      </Office>
    ),
  },
  {
    icon: (
      <Office letter="X" box="#107c41">
        <path d="M11.500 3h18v11h-18z" fill="#21a366" />
        <path d="M29.500 3h18v11h-18z" fill="#33c481" />
        <path d="M11.500 13.500h18V24h-18z" fill="#107c41" />
        <path d="M29.500 13.500h18V24h-18z" fill="#21a366" />
        <path d="M11.500 24h36v10.500h-36z" fill="#107c41" />
        <path d="M11.500 34.500h36V45h-36z" fill="#185c37" />
      </Office>
    ),
  },
  {
    icon: (
      <svg viewBox="0 0 48 48" className="size-12">
        <path d="m33 17-4-7 4 3-1-8 3 5 1-9 2 9 4-7-1 7 5-3-3 6 3 0-5 5z" fill="#2b8a1d" />
        <ellipse cx="34.500" cy="30" rx="9.500" ry="12.500" fill="#b98228" />
        <path d="m27 23 15 14M25.500 30l11 12M31 19l13 13M42 22 27 37M44 29 32 41M37 18 25.500 30" stroke="#5d3d10" strokeWidth="1.500" />
        <path d="M1 16h21c1 9-2 15-9 15-8 0-13-6-12-15z" fill="#d9b4ba" />
        <path d="M1 19h21c0 3 0 5-1 7H2c-1-2-1-4-1-7z" fill="#c9151b" />
        <path d="M3 26h17c-2 3-4 4-7 4-5 0-8-1-10-4z" fill="#f08a24" />
        <path d="M13 31v11" stroke="#aab3c0" strokeWidth="2.500" />
        <ellipse cx="13" cy="43.500" rx="7" ry="3" fill="#aab3c0" />
        <path d="M13 8q5-3 11 3-6-1-11-3z" fill="#29c417" stroke="#29c417" strokeWidth="1.500" />
        <path d="m17 9 2 10M7 10l3 10" stroke="#7b3aa0" strokeWidth="1.500" />
        <circle cx="5" cy="5.500" r="2" fill="#e80fa0" />
        <ellipse cx="6.500" cy="10.500" rx="4" ry="2" fill="#d9d26a" />
      </svg>
    ),
  },
  {
    active: true,
    icon: (
      <svg viewBox="0 0 48 48" className="size-12">
        <path d="M24 24 3.200 12A24 24 0 0 0 24 48l10-18z" fill="#2a9a48" />
        <path d="M24 12h20.800A24 24 0 0 1 24 48l10.400-18z" fill="#fbc116" />
        <path d="M3.200 12A24 24 0 0 1 44.800 12H24l-10.500 18z" fill="#e94235" />
        <circle cx="24" cy="24" r="12" fill="#fff" />
        <circle cx="24" cy="24" r="9.700" fill="#2a76ea" />
      </svg>
    ),
  },
  {
    icon: (
      <svg viewBox="0 0 48 48" className="size-12">
        <circle cx="24" cy="24" r="21" fill="#1d1b1d" stroke="#f2f2f2" strokeWidth="2.200" />
        <g fill="#c9c9c9">
          <path d="M25 25c-1-4-9-6-10-16 0-2 1-3 2-3-3 9 8 11 9 17z" />
          <path d="M23 24c3-6 12-6 18 5-5-5-11-6-17-3z" />
          <path d="M25 23c2 8-2 15-12 15 7-1 11-6 10-14z" />
        </g>
      </svg>
    ),
  },
  {
    icon: (
      <svg viewBox="0 0 48 48" className="size-12">
        <rect width="48" height="48" rx="10" fill="#1f3d4c" />
        <path d="M0 36.500h48V38q0 10-10 10H10Q0 48 0 38z" fill="#415b6a" />
        <path d="m20.500 5.500 6 6-6 6-6-6z" fill="#fff" />
        <path d="m28 12 6.500 6L21 31l-6-6z" fill="#52e3c2" />
        <path d="m19 40 2.500 3.500L24 40l2.500 3.500L29 40" fill="none" stroke="#fff" strokeWidth="2.500" />
      </svg>
    ),
  },
  {
    icon: (
      <svg viewBox="0 0 48 48" className="size-12">
        <rect x="3" y="3" width="42" height="42" rx="8" fill="#fff" />
        <path d="M31 19v-4.500H12V19l26 13M31 29.500V34H12v-4.500L38 15.500" fill="none" stroke="#000" strokeWidth="3.800" />
      </svg>
    ),
  },
  { badge: "7", icon: <FaWhatsapp className="size-[54px] text-[#25d366]" /> },
  {
    icon: (
      <svg viewBox="0 0 48 48" className="size-12">
        <path d="M5 30V23C5 10 14 4 24 4s19 6 19 19v7" fill="none" stroke="#0b10e8" strokeWidth="4" />
        <rect x="1" y="18" width="9" height="23" rx="4" fill="#0a10d8" />
        <rect x="38" y="18" width="9" height="23" rx="4" fill="#0a10d8" />
        <path d="m12 40V26l3-7 3 2 3-6 3 2 3-2 3 6 3-1 3 8v12l-4-2-4 4-4-1-4 1-4-3z" fill="#e5a31c" />
        <path d="m12 32 3-3 3 2 3-3 3 2 3-3 3 3 3-2 3 2v4l-4 1-3-2-4 3-4-2-4 2-3-1z" fill="#f3230d" />
      </svg>
    ),
  },
  {
    icon: (
      <svg viewBox="0 0 48 48" className="size-12">
        <rect x="0.500" width="47" height="47" rx="8" fill="#0c0a16" />
        <path d="M9 7.500h9.500v33H9zM35.500 7.500h3v33h-3z" fill="#a259ff" />
        <circle cx="27" cy="23.500" r="7.500" fill="#a259ff" />
      </svg>
    ),
  },
  {
    dot: true,
    icon: (
      <svg viewBox="0 0 48 48" className="size-12">
        <path d="M36 0v13L5.500 36.500 0.500 33q-1-1.500 0-3z" fill="#0069b5" />
        <path d="M36 48V35L5.500 11.500 0.500 15q-1 1.500 0 3z" fill="#0a8ad6" />
        <path d="m36 0 11 5.500q1 .5 1 2v33q0 1.500-1 2L36 48z" fill="#28a8f2" />
      </svg>
    ),
  },
];

function Taskbar() {
  return (
    <div className="flex h-24 shrink-0 items-center bg-linear-to-r from-[#11234f] via-[#11244e] to-[#14274a] pl-8">
      <svg viewBox="0 0 48 48" className="size-12">
        <rect y="2" width="48" height="44" rx="2" fill="#0a63b5" />
        <rect x="4" y="6" width="18" height="36" rx="1.500" fill="#f5f5f5" />
        <path d="M26 6h18v20H26z" fill="#69d8ff" />
        <path d="M26 26h18v8H26z" fill="#1fa6fc" />
        <path d="M26 34h18v8H26z" fill="#0083f0" />
      </svg>
      <div className="ml-[340px] flex">
        {apps.map((app, i) => (
          <div key={i} className="relative flex h-24 w-[88px] items-center justify-center">
            {app.active && (
              <span className="absolute inset-x-1 top-2 bottom-2 rounded-[8px] border-2 border-white/8 bg-white/7" />
            )}
            <span className={i === 0 ? "relative -ml-1 flex" : "relative flex"}>{app.icon}</span>
            {app.badge && (
              <span className="absolute top-3.5 right-2.5 flex size-8 items-center justify-center rounded-full bg-[#5ccdff] text-2xl leading-8 text-[#101820]">
                {app.badge}
              </span>
            )}
            {app.active && <span className="absolute bottom-2.5 left-7 h-1.5 w-8 rounded-full bg-[#5ccdff]" />}
            {app.dot && <span className="absolute bottom-2.5 left-[38px] h-1.5 w-3 rounded-full bg-[#949bb0]" />}
          </div>
        ))}
      </div>
      <svg viewBox="0 0 26 14" className="ml-[45px] h-3.5 w-[26px]">
        <path d="M1 13 13 1l12 12" fill="none" stroke="#fff" strokeWidth="2" />
      </svg>
      <svg viewBox="0 0 34 30" className="mt-1 ml-[34px] h-[30px] w-[34px]">
        <circle cx="17" cy="9" r="8" fill="#8e98ad" />
        <path d="M1 14a7 7 0 0 1 12-5q3 2 4 6l4 6H8q-7 0-7-7z" fill="#e4e7ee" />
        <circle cx="24" cy="20.500" r="9" fill="#5ccdff" />
        <path d="M24 14v3M24 19v7" stroke="#10203a" strokeWidth="2.800" />
      </svg>
      <svg viewBox="0 0 32 26" className="ml-[31px] h-[26px] w-8">
        <g fill="none" stroke="#fff" strokeWidth="2.200" strokeLinecap="round">
          <path d="M1.500 10a20 20 0 0 1 29 0M6.500 15a13 13 0 0 1 19 0M11 19.500a7 7 0 0 1 10 0" />
        </g>
        <circle cx="16" cy="23" r="2.600" fill="#fff" />
      </svg>
      <svg viewBox="0 0 34 28" className="ml-4 h-7 w-[34px]">
        <g fill="none" stroke="#fff" strokeWidth="2.100" strokeLinecap="round" strokeLinejoin="round">
          <path d="M1.500 9.500h5L14 3v22l-7.500-6.500h-5zM18.500 10q2.500 4 0 8M23 6.500q5 7.500 0 15M27.500 3q8 11 0 22" />
        </g>
      </svg>
      <div className="-mt-0.5 ml-auto text-right text-2xl leading-8 tracking-[-0.35px] text-white">
        <div>3:38 AM</div>
        <div>7/7/2025</div>
      </div>
      <span className="mr-10 ml-[15px] flex size-8 items-center justify-center rounded-full bg-[#5ccdff] text-[22px] leading-8 text-[#101820]">
        2
      </span>
    </div>
  );
}

export default function App() {
  return (
    <div className="flex h-[1440px] w-[2560px] flex-col overflow-hidden bg-white font-['Open_Sans','Noto_Sans',sans-serif]">
      <TabStrip />
      <Toolbar />
      <Page />
      <Taskbar />
    </div>
  );
}
